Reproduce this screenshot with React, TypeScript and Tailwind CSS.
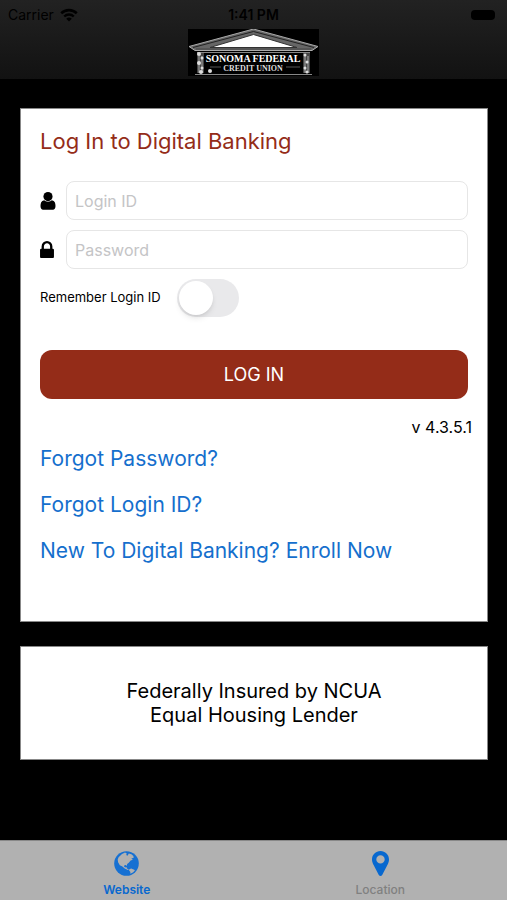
import React from "react";

const links = ["Forgot Password?", "Forgot Login ID?", "New To Digital Banking? Enroll Now"];

const WifiIcon = () => (
  <svg viewBox="0 0 18 14" className="h-3.5 w-[18px]" fill="none" aria-hidden="true">
    <path d="M1.2 5.3a11.2 11.2 0 0 1 15.6 0" stroke="#000" strokeWidth="2.6" />
    <path d="M4.2 8.5a6.9 6.9 0 0 1 9.6 0" stroke="#000" strokeWidth="2.4" />
    <path d="M9 13.6 6.2 10.8a4 4 0 0 1 5.6 0Z" fill="#000" />
  </svg>
);

const UserIcon = () => (
  <svg viewBox="0 128 1280 1536" className="h-[18px] w-4" fill="currentColor" aria-hidden="true">
    <path d="M1280 1330q0 150-62.5 230t-150.5 90h-854q-88-10-150.5-90t-62.5-230q0-180 60-320t250-180q110 120 330 120t330-120q190 40 250 180t60 320z" />
    <circle cx="640" cy="520" r="390" />
  </svg>
);

const LockIcon = () => (
  <svg viewBox="0 128 1152 1408" className="h-[17px] w-3.5" fill="currentColor" aria-hidden="true">
    <path d="M320 768h512v-192q0-106-75-181t-181-75-181 75-75 181v192zm832 96v576q0 40-28 68t-68 28h-960q-40 0-68-28t-28-68v-576q0-40 28-68t68-28h32v-192q0-184 132-316t316-132 316 132 132 316v192h32q40 0 68 28t28 68z" />
  </svg>
);

const GlobeIcon = () => (
  <svg viewBox="0 0 25 25" className="size-[25px]" aria-hidden="true">
    <circle cx="12.5" cy="12.5" r="12.3" fill="#1670d2" />
    <g fill="#b1b1b1">
      <path d="M4.600 6.200 8 2.900l3-1.300 1.800.9-.6 1.500 1.300.8 1.300-2.300 2.600.7 2 1.900.2 1.900-2.300.2 1.500 1.500-2.200.7-1.800 2.400-1.700 1.300-.2 1.800-1-.9-1.500.2-.3 1.600 1.300.8 1-.6.5 1.500 2 1-1 .5-3.200-1.600-2.300-1.900-2.600-1.200-1.700-3-.4-2.800Z" />
      <path d="m15.300 18.300 1.900-.7 3 1.200.7.7-2 2.100-2.600 1.200.1-1.900-1.300-1.300Z" />
    </g>
  </svg>
);

const PinIcon = () => (
  <svg viewBox="0 0 17 25" className="h-[25px] w-[17px]" fill="#0868cf" aria-hidden="true">
    <path
      fillRule="evenodd"
      d="M8.500 0C3.800 0 0 3.700 0 8.400c0 2.100.7 3.700 1.600 5.500l5.200 10.100c.7 1.300 2.700 1.300 3.400 0l5.200-10.100c.9-1.800 1.600-3.400 1.600-5.500C17 3.700 13.200 0 8.500 0Zm0 4.200a4.200 4.200 0 1 1 0 8.400 4.200 4.200 0 0 1 0-8.400Z"
    />
  </svg>
);

// Temple front with the name between the two columns
const Logo = () => (
  <svg viewBox="0 0 131 47" className="h-[47px] w-[131px]" role="img" aria-label="Sonoma Federal Credit Union">
    <rect width="131" height="47" fill="#000" />
    <path d="M1 17.500 65.500 0 130 17.500 124 21.500H7Z" fill="#666" stroke="#aaa" strokeWidth="1" />
    <path d="M5 18.500 65.500 2.500 126 18.500" fill="none" stroke="#222" strokeWidth="1" />
    <path d="M22 18.500 65.500 5.500 109 18.500Z" fill="#fff" stroke="#333" strokeWidth="1" />
    <path d="M8 20h115" stroke="#444" strokeWidth="1" />
    <path d="M9 23.500h113" stroke="#888" strokeWidth="1" />
    {/* columns */}
    <path d="M9 24h7v20H9ZM115 24h7v20h-7Z" fill="#444" />
    <path d="M11 27v17M14 27v17M117 27v17M120 27v17" stroke="#aaa" strokeWidth="1" />
    <g fill="#ddd">
      <circle cx="11" cy="25" r="2" />
      <circle cx="14" cy="29" r="1.500" />
      <circle cx="11" cy="34" r="2" />
      <circle cx="14" cy="39" r="1.500" />
      <circle cx="22" cy="42" r="2" />
      <circle cx="13" cy="43" r="2" />
      <circle cx="117" cy="26" r="1.500" />
      <circle cx="119" cy="33" r="1.500" />
      <circle cx="117" cy="39" r="1.500" />
      <circle cx="119" cy="43" r="1.500" />
    </g>
    <path d="M7 45.500h117" stroke="#888" strokeWidth="1" />
    <path d="M22 38h11M98 38h14" stroke="#555" strokeWidth="1" />
    <text x="65" y="33" textAnchor="middle" fontSize="10" fontWeight="700" fill="#fff" className="font-['Liberation_Serif',serif]">
      SONOMA FEDERAL
    </text>
    <text x="65" y="42" textAnchor="middle" fontSize="8" fontWeight="700" fill="#ddd" className="font-['Liberation_Serif',serif]">
      CREDIT UNION
    </text>
  </svg>
);

const App = () => {
  return (
    <div className="flex min-h-screen flex-col bg-black font-[Inter,sans-serif] text-black">
      <header className="flex flex-col items-center bg-linear-to-b from-[#222222] to-[#121212] pb-[3px]">
        {/* Status bar */}
        <div className="grid h-[29px] w-full grid-cols-3 items-center px-2 text-sm">
          <div className="flex items-center gap-1.5">
            <span>Carrier</span>
            <WifiIcon />
          </div>
          <span className="text-center font-semibold">1:41 PM</span>
          <span className="mr-1 h-2.5 w-6 justify-self-end rounded-sm bg-black" />
        </div>
        <Logo />
      </header>

      <main className="flex flex-1 flex-col gap-6 pt-[29px] pr-[19px] pb-20 pl-5">
        <section className="flex-1 border border-[#888888] bg-white px-[19px] pt-4">
          <h1 className="text-[22px] leading-8 text-[#942c18]">Log In to Digital Banking</h1>

          <form className="mt-6" onSubmit={(e) => e.preventDefault()}>
            <div className="flex items-center gap-2.5">
              <label htmlFor="login" aria-label="Login ID" className="w-4">
                <UserIcon />
              </label>
              <input
                id="login"
                type="text"
                placeholder="Login ID"
                className="h-[39px] min-w-0 flex-1 rounded-lg border border-[#e6e6e6] px-2 text-base placeholder:text-[#c4c4c6]"
              />
            </div>
            <div className="mt-2.5 flex items-center gap-2.5">
              <label htmlFor="password" aria-label="Password" className="w-4">
                <LockIcon />
              </label>
              <input
                id="password"
                type="password"
                placeholder="Password"
                className="h-[39px] min-w-0 flex-1 rounded-lg border border-[#e6e6e6] px-2 text-base placeholder:text-[#c4c4c6]"
              />
            </div>
            <div className="mt-2.5 flex items-center gap-4">
              <label htmlFor="remember" className="text-[13px]">
                Remember Login ID
              </label>
              <input
                id="remember"
                type="checkbox"
                role="switch"
                className="flex h-[38px] w-[62px] appearance-none rounded-full bg-[#e9e9eb] p-0.5 before:size-[34px] before:rounded-full before:bg-white before:shadow-md checked:justify-end checked:bg-green-500"
              />
            </div>
            <button type="submit" className="mt-[33px] h-[49px] w-full rounded-xl bg-[#942c18] text-lg text-white">
              LOG IN
            </button>
          </form>

          <p className="-mr-1 mt-4 text-right text-base leading-6">v 4.3.5.1</p>
          <ul className="mt-1 space-y-3.5">
            {links.map((link) => (
              <li key={link} className="text-[21px] leading-8">
                <a href="#" className="text-[#156fcd]">
                  {link}
                </a>
              </li>
            ))}
          </ul>
        </section>

        <section className="border border-[#888888] bg-white py-8 text-center text-xl leading-6">
          <p>Federally Insured by NCUA</p>
          <p>Equal Housing Lender</p>
        </section>
      </main>

      {/* Tab bar */}
      <nav className="grid h-[60px] grid-cols-2 border-t border-[#888888] bg-[#b1b1b1] text-xs">
        <a href="#" className="flex flex-col items-center gap-1.5 pt-2.5 font-semibold text-[#0868cf]">
          <GlobeIcon />
          Website
        </a>
        <a href="#" className="flex flex-col items-center gap-1.5 pt-2.5 font-medium text-[#808080]">
          <PinIcon />
          Location
        </a>
      </nav>
    </div>
  );
};

export default App;
